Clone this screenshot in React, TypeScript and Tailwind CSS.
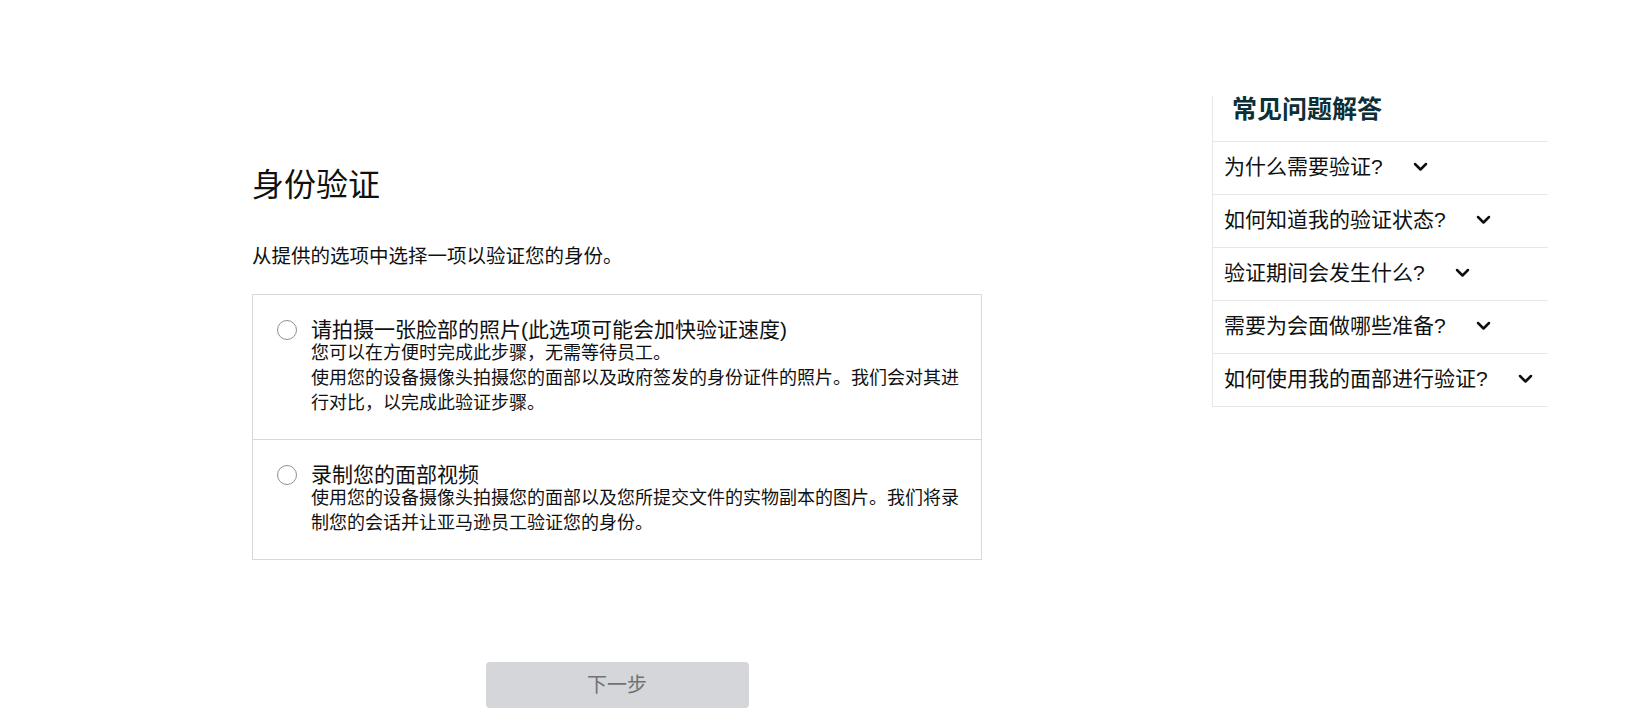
const faqs = [
  "为什么需要验证?",
  "如何知道我的验证状态?",
  "验证期间会发生什么?",
  "需要为会面做哪些准备?",
  "如何使用我的面部进行验证?",
];

const options = [
  {
    title: "请拍摄一张脸部的照片(此选项可能会加快验证速度)",
    lines: [
      "您可以在方便时完成此步骤，无需等待员工。",
      "使用您的设备摄像头拍摄您的面部以及政府签发的身份证件的照片。我们会对其进行对比，以完成此验证步骤。",
    ],
  },
  {
    title: "录制您的面部视频",
    lines: [
      "使用您的设备摄像头拍摄您的面部以及您所提交文件的实物副本的图片。我们将录制您的会话并让亚马逊员工验证您的身份。",
    ],
  },
];

const Chevron = () => (
  <svg width="15" height="10" viewBox="0 0 15 10" className="ml-[30px] shrink-0">
    <polyline
      points="2,2 7.5,7.5 13,2"
      fill="none"
      stroke="#0f1111"
      strokeWidth="2.5"
      strokeLinecap="round"
      strokeLinejoin="round"
    />
  </svg>
);

const App = () => {
  return (
    <div className="min-h-[721px] w-full bg-white text-[#0f1111] font-['Liberation_Sans','Noto_Sans_CJK_SC',sans-serif]">
      <div className="flex items-start pt-[96px] pl-[252px]">
        {/* main column */}
        <div className="w-[730px] shrink-0 pt-[69px]">
          <h1 className="text-[32px] leading-[40px] font-normal">身份验证</h1>
          <p className="mt-[37px] text-[19.5px] leading-[28px]">
            从提供的选项中选择一项以验证您的身份。
          </p>

          <div className="mt-[24px] border border-[#d5d9d9]">
            {options.map((opt, i) => (
              <label
                key={i}
                className={
                  "flex items-start cursor-pointer pl-[24px] pr-[20px] pt-[23px] pb-[23px]" +
                  (i > 0 ? " border-t border-[#d5d9d9]" : "")
                }
              >
                <span className="mt-[2px] h-[20px] w-[20px] shrink-0 rounded-full border border-[#8d9096] bg-white" />
                <div className="ml-[14px] min-w-0 flex-1">
                  <div className="text-[21px] leading-[23px]">{opt.title}</div>
                  {opt.lines.map((l, j) => (
                    <div key={j} className="text-[18px] leading-[25px]">
                      {l}
                    </div>
                  ))}
                </div>
              </label>
            ))}
          </div>

          <div className="mt-[102px] flex justify-center">
            <button
              disabled
              className="h-[46px] w-[263px] rounded-[4px] bg-[#d5d6da] text-[20px] text-[#6f7373]"
            >
              下一步
            </button>
          </div>
        </div>

        {/* FAQ column */}
        <div className="ml-[230px] w-[336px] shrink-0 border-l border-[#e7e7e7]">
          <h2 className="h-[45px] pl-[19px] text-[25px] leading-[26px] font-bold text-[#0d2f38]">
            常见问题解答
          </h2>
          {faqs.map((q) => (
            <div
              key={q}
              className="flex h-[53px] items-center border-t border-[#e7e7e7] pl-[11px] pb-[2px] text-[21px]"
            >
              <span>{q}</span>
              <Chevron />
            </div>
          ))}
          <div className="border-t border-[#e7e7e7]" />
        </div>
      </div>
    </div>
  );
};

export default App;
